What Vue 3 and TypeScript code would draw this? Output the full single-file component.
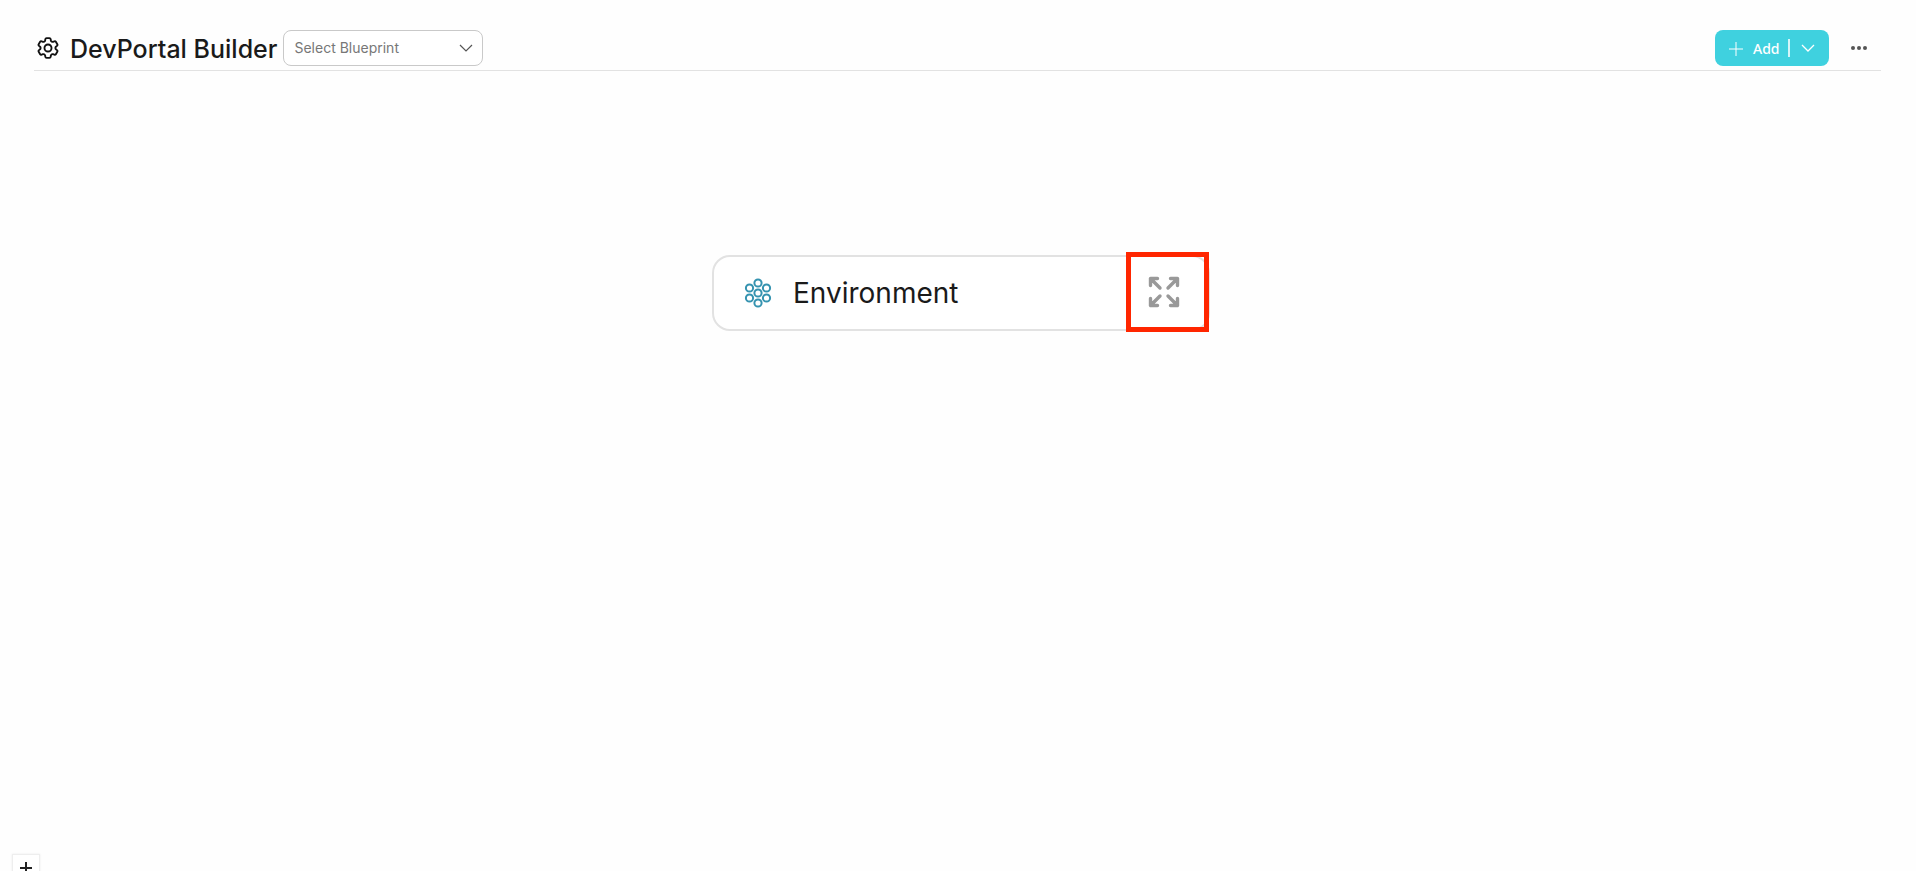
<script setup lang="ts">
import { ref } from 'vue'

interface Blueprint {
  id: string
  name: string
}

const blueprints: Blueprint[] = [{ id: 'environment', name: 'Environment' }]
const selected = ref('')
const zoomLevel = ref(1)

// Centres of the seven rings in the cluster icon
const rings: [number, number][] = [
  [14, 5],
  [5.5, 10],
  [22.5, 10],
  [14, 15],
  [5.5, 20],
  [22.5, 20],
  [14, 25],
]
</script>

<template>
  <div class="page">
    <header class="toolbar">
      <svg class="gear" viewBox="2 2 20 20" aria-hidden="true">
        <path
          d="M9.594 3.94c.09-.542.56-.94 1.11-.94h2.593c.55 0 1.02.398 1.11.94l.213 1.281c.063.374.313.686.645.87.074.04.147.083.22.127.325.196.72.257 1.075.124l1.217-.456a1.125 1.125 0 0 1 1.37.49l1.296 2.247a1.125 1.125 0 0 1-.26 1.431l-1.003.827c-.293.241-.438.613-.43.992a7.723 7.723 0 0 1 0 .255c-.008.378.137.75.43.991l1.004.827c.424.35.534.955.26 1.43l-1.298 2.247a1.125 1.125 0 0 1-1.369.491l-1.217-.456c-.355-.133-.75-.072-1.076.124a6.47 6.47 0 0 1-.22.128c-.331.183-.581.495-.644.869l-.213 1.281c-.09.543-.56.94-1.11.94h-2.594c-.55 0-1.019-.398-1.11-.94l-.213-1.281c-.062-.374-.312-.686-.644-.87a6.52 6.52 0 0 1-.22-.127c-.325-.196-.72-.257-1.076-.124l-1.217.456a1.125 1.125 0 0 1-1.369-.49l-1.297-2.247a1.125 1.125 0 0 1 .26-1.431l1.004-.827c.292-.24.437-.613.43-.991a6.932 6.932 0 0 1 0-.255c.007-.38-.138-.751-.43-.992l-1.004-.827a1.125 1.125 0 0 1-.26-1.43l1.297-2.247a1.125 1.125 0 0 1 1.37-.491l1.216.456c.356.133.751.072 1.076-.124.072-.044.146-.086.22-.128.332-.183.582-.495.644-.869l.214-1.28Z"
        />
        <circle cx="12" cy="12" r="3.2" />
      </svg>
      <h1 class="title">DevPortal Builder</h1>
      <div class="picker">
        <select v-model="selected" class="picker-select" aria-label="Select Blueprint">
          <option value="">Select Blueprint</option>
          <option v-for="b in blueprints" :key="b.id" :value="b.id">{{ b.name }}</option>
        </select>
        <svg class="picker-arrow" viewBox="0 0 14 8" aria-hidden="true">
          <path d="M1 1l6 6 6-6" />
        </svg>
      </div>
      <div class="add">
        <button class="add-main" type="button">
          <svg class="plus" viewBox="0 0 14 14" aria-hidden="true"><path d="M7 0v14M0 7h14" /></svg>
          Add
        </button>
        <span class="divider"></span>
        <button class="add-more" type="button" aria-label="More add options">
          <svg class="chevron" viewBox="0 0 14 8" aria-hidden="true"><path d="M1 1l6 6 6-6" /></svg>
        </button>
      </div>
      <button class="more" type="button" aria-label="More actions">
        <svg class="dots" viewBox="0 0 18 4" aria-hidden="true">
          <circle cx="3" cy="2" r="2" />
          <circle cx="9" cy="2" r="2" />
          <circle cx="15" cy="2" r="2" />
        </svg>
      </button>
    </header>

    <main class="canvas">
      <article v-for="b in blueprints" :key="b.id" class="node">
        <svg class="cluster" viewBox="0 0 28 30" aria-hidden="true">
          <circle v-for="([x, y], i) in rings" :key="i" :cx="x" :cy="y" r="3.6" />
        </svg>
        <h2 class="node-name">{{ b.name }}</h2>
        <button class="expand" type="button" aria-label="Expand">
          <svg class="arrows" viewBox="0 0 32 32" aria-hidden="true">
            <path d="M2.5 9.5v-7h7M2.5 2.5l9.5 9.5M22.5 2.5h7v7M29.5 2.5L20 12M2.5 22.5v7h7M2.5 29.5L12 20M22.5 29.5h7v-7M29.5 29.5L20 20" />
          </svg>
        </button>
      </article>
      <button class="zoom-in" type="button" aria-label="Zoom in" @click="zoomLevel += 1">
        <svg class="zoom-plus" viewBox="0 0 12 12" aria-hidden="true"><path d="M6 0v12M0 6h12" /></svg>
      </button>
    </main>
  </div>
</template>

<style>
body {
  margin: 0;
  background: #fefefe;
}
</style>

<style scoped>
.page {
  box-sizing: border-box;
  height: 100vh;
  display: flex;
  flex-direction: column;
  overflow: hidden;
  background: #fefefe;
  font-family: Inter, "Liberation Sans", sans-serif;
  color: #1a1a1a;
}

svg {
  display: block;
  fill: none;
  flex: none;
}

button {
  padding: 0;
  border: 0;
  background: none;
  color: inherit;
  font: inherit;
  cursor: pointer;
}

.toolbar {
  display: flex;
  align-items: center;
  margin: 0 35px 0 34px;
  padding: 30px 0 4px 3px;
  border-bottom: 1px solid #e2e2e2;
}

.gear {
  width: 22px;
  height: 22px;
  stroke: #111;
  stroke-width: 1.7;
}

.title {
  margin: 0 6px 0 11px;
  padding-top: 2px;
  font-size: 25px;
  line-height: 34px;
  font-weight: 500;
  white-space: nowrap;
}

.picker {
  position: relative;
  width: 200px;
  height: 36px;
}

.picker-select {
  box-sizing: border-box;
  width: 100%;
  height: 100%;
  padding: 0 32px 2px 10px;
  appearance: none;
  border: 1px solid #c9c9c9;
  border-radius: 8px;
  background: #fff;
  color: #777;
  font-family: inherit;
  font-size: 14px;
}

.picker-arrow {
  position: absolute;
  top: 14px;
  right: 10px;
  width: 14px;
  height: 8px;
  stroke: #555;
  stroke-width: 1.2;
  pointer-events: none;
}

.add {
  display: flex;
  align-items: center;
  width: 114px;
  height: 36px;
  margin-left: auto;
  border-radius: 8px;
  background: #3fd1df;
  color: #fff;
}

.add-main {
  display: flex;
  align-items: center;
  gap: 10px;
  height: 36px;
  padding: 1px 8px 0 14px;
  font-family: "Noto Sans", sans-serif;
  font-size: 14px;
  line-height: 20px;
  font-weight: 500;
}

.plus {
  width: 14px;
  height: 14px;
  stroke: #fff;
  stroke-width: 1;
}

.divider {
  width: 2px;
  height: 18px;
  background: #d5f5f8;
}

.add-more {
  display: flex;
  align-items: center;
  height: 36px;
  padding: 0 11px;
}

.chevron {
  width: 14px;
  height: 8px;
  stroke: #fff;
  stroke-width: 1.3;
}

.more {
  margin: 0 13px 0 21px;
  height: 36px;
}

.dots {
  width: 18px;
  height: 4px;
  fill: #555;
}

.canvas {
  position: relative;
  flex: 1;
}

.node {
  box-sizing: border-box;
  position: absolute;
  top: 184px;
  left: 712px;
  display: flex;
  align-items: center;
  width: 498px;
  height: 76px;
  padding-left: 30px;
  border: 2px solid #e2e2e2;
  border-radius: 18px;
  background: #fff;
}

.cluster {
  width: 28px;
  height: 30px;
  stroke: #3593b0;
  stroke-width: 2;
}

.node-name {
  margin: 0 0 0 21px;
  font-size: 28px;
  line-height: 36px;
  font-weight: 400;
}

.expand {
  box-sizing: border-box;
  position: absolute;
  top: -5px;
  right: -1px;
  display: flex;
  align-items: center;
  justify-content: center;
  width: 83px;
  height: 80px;
  border: 5px solid #ff2600;
}

.arrows {
  width: 32px;
  height: 32px;
  margin-right: 7px;
  stroke: #999;
  stroke-width: 3.4;
  stroke-linecap: round;
  stroke-linejoin: round;
}

.zoom-in {
  box-sizing: border-box;
  position: absolute;
  bottom: -10px;
  left: 12px;
  display: flex;
  align-items: center;
  justify-content: center;
  width: 28px;
  height: 27px;
  border: 1px solid #eee;
  background: #fff;
  box-shadow: 0 0 2px rgba(0, 0, 0, 0.08);
}

.zoom-plus {
  width: 12px;
  height: 12px;
  stroke: #222;
  stroke-width: 2;
}
</style>
